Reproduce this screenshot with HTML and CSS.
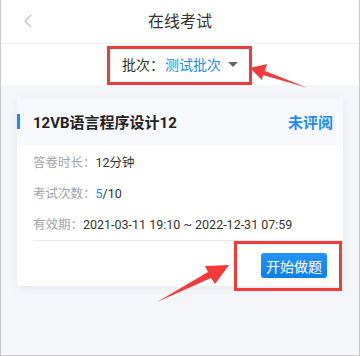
FILE: index.html
```html
<!DOCTYPE html>
<html lang="zh-CN">
<head>
    <meta charset="UTF-8">
    <meta name="viewport" content="width=device-width, initial-scale=1.0">
    <title>在线考试</title>
    <link rel="stylesheet" href="styles.css">
</head>
<body>
    <div class="page">
        <header class="nav">
            <svg class="back" width="10" height="14" viewBox="0 0 10 14">
                <polyline points="8,1 2,7 8,13" fill="none" stroke="#c4c6cc" stroke-width="1.4"/>
            </svg>
            <h1 class="nav-title">在线考试</h1>
        </header>

        <div class="filter">
            <span class="filter-label">批次：</span>
            <span class="filter-value">测试批次</span>
            <span class="caret"></span>
        </div>

        <div class="card">
            <div class="card-head">
                <span class="card-title">12VB语言程序设计12</span>
                <span class="card-status">未评阅</span>
            </div>
            <div class="card-info">
                <div class="row"><span class="label">答卷时长：</span>12分钟</div>
                <div class="row"><span class="label">考试次数：</span><span class="hl">5</span>/10</div>
                <div class="row"><span class="label">有效期：</span>2021-03-11 19:10 ~ 2022-12-31 07:59</div>
            </div>
            <div class="card-foot">
                <button class="btn">开始做题</button>
            </div>
        </div>

        <!-- annotation marks -->
        <svg class="marks" width="360" height="356" viewBox="0 0 360 356">
            <rect x="108.5" y="47.5" width="142" height="36" fill="none" stroke="#f33a3a" stroke-width="3"/>
            <polygon points="250,68 267,64 265,71 308,88 263,75 262,80" fill="#f33a3a"/>
            <rect x="235.5" y="242.5" width="105" height="47" fill="none" stroke="#f33a3a" stroke-width="3"/>
            <polygon points="229,265 215,284 211,278 157,302 208,272 205,266" fill="#f33a3a"/>
        </svg>
    </div>
</body>
</html>
```

FILE: styles.css
```css
* {
    box-sizing: border-box;
}
body {
    margin: 0;
    font-family: Roboto, "Noto Sans CJK SC", sans-serif;
    color: #333;
}
.page {
    position: relative;
    width: 360px;
    height: 356px;
    background: #f4f6fa;
    border: 1px solid #c8c8c8;
    border-top: none;
    overflow: hidden;
}
.nav {
    position: relative;
    height: 44px;
    background: #fff;
    border-bottom: 1px solid #eef0f3;
    display: flex;
    align-items: center;
    justify-content: center;
}
.back {
    position: absolute;
    left: 22px;
    top: 14px;
}
.nav-title {
    margin: 0 0 3px;
    font-size: 16px;
    font-weight: normal;
    color: #333;
}
.filter {
    height: 41px;
    background: #fff;
    display: flex;
    align-items: center;
    justify-content: center;
    font-size: 14px;
    padding-bottom: 2px;
}
.filter-label {
    color: #333;
    margin-right: 1px;
}
.filter-value {
    color: #1a8cf0;
}
.caret {
    width: 0;
    height: 0;
    margin-left: 7px;
    margin-top: 2px;
    border-left: 5px solid transparent;
    border-right: 5px solid transparent;
    border-top: 5px solid #666;
}
.card {
    margin: 13px 16px 0;
    background: #fff;
    border-radius: 3px;
    box-shadow: 0 2px 8px rgba(60, 80, 120, 0.08);
    overflow: hidden;
}
.card-head {
    height: 47px;
    background: #f7f8fb;
    display: flex;
    align-items: center;
    padding-right: 10px;
}
.card-head::before {
    content: "";
    width: 3px;
    height: 15px;
    background: #1a8cf0;
    margin-right: 13px;
}
.card-title {
    flex: 1;
    font-size: 15px;
    font-weight: bold;
    color: #222;
}
.card-status {
    font-size: 15px;
    font-weight: bold;
    color: #1a8cf0;
}
.card-info {
    margin-left: 16px;
    padding-top: 2px;
    border-bottom: 1px solid #e8eaee;
}
.row {
    height: 31px;
    line-height: 31px;
    font-size: 12.5px;
    color: #333;
}
.label {
    color: #a0a3a8;
}
.hl {
    color: #1a8cf0;
}
.card-foot {
    display: flex;
    justify-content: flex-end;
    padding: 12px 16px 8px;
}
.btn {
    height: 25px;
    width: 66px;
    padding: 0;
    border: none;
    border-radius: 3px;
    background: linear-gradient(#2495f5, #0f80e8);
    color: #fff;
    font-family: inherit;
    font-size: 14px;
}
.marks {
    position: absolute;
    left: -1px;
    top: 0;
    pointer-events: none;
}
```
